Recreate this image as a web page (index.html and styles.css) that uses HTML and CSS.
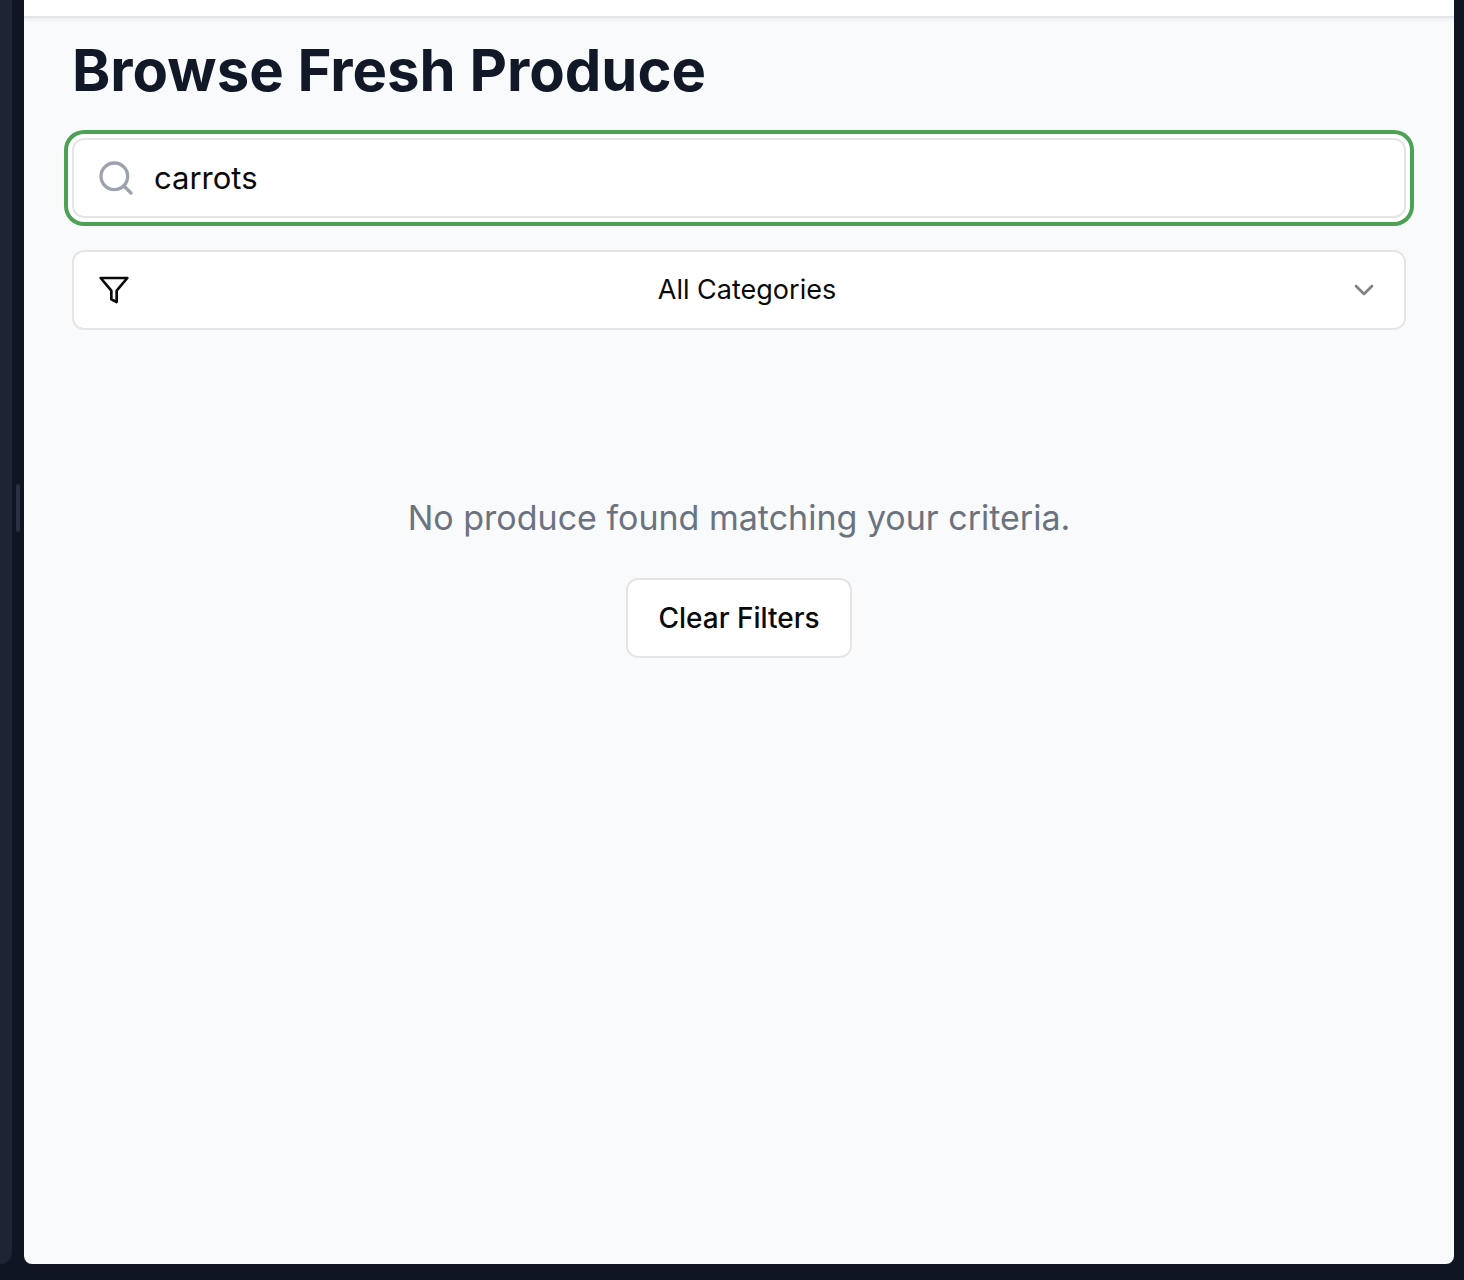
FILE: index.html
```html
<!DOCTYPE html>
<html lang="en">
<head>
  <meta charset="utf-8">
  <meta name="viewport" content="width=device-width, initial-scale=1">
  <title>Browse Fresh Produce</title>
  <link rel="stylesheet" href="styles.css">
</head>
<body>
  <div class="workspace">
    <aside class="side-panel"></aside>
    <div class="resizer"><span class="resizer-grip"></span></div>
    <div class="preview">
      <header class="site-header"></header>
      <main class="page">
        <h1 class="title">Browse Fresh Produce</h1>
        <div class="search">
          <svg class="search-icon" viewBox="0 0 24 24" aria-hidden="true"><circle cx="11" cy="11" r="8"/><path d="m21 21-4.3-4.3"/></svg>
          <input class="search-input" type="text" value="carrots" aria-label="Search produce">
        </div>
        <div class="category">
          <select class="category-select" aria-label="Category">
            <option>All Categories</option>
          </select>
          <svg class="category-icon" viewBox="0 0 24 24" aria-hidden="true"><polygon points="22 3 2 3 10 12.46 10 19 14 21 14 12.46 22 3"/></svg>
          <svg class="category-icon category-chevron" viewBox="0 0 24 24" aria-hidden="true"><path d="m6 9 6 6 6-6"/></svg>
        </div>
        <section class="empty">
          <p class="empty-text">No produce found matching your criteria.</p>
          <button class="clear-button" type="button">Clear Filters</button>
        </section>
      </main>
    </div>
  </div>
</body>
</html>
```
FILE: styles.css
```css
* {
  box-sizing: border-box;
}

body {
  margin: 0;
  background: #0f1523;
  color: #0a0a0a;
  font-family: Inter, "Liberation Sans", sans-serif;
}

.workspace {
  display: flex;
  min-height: 100vh;
  padding: 0 10px 16px 0;
}

.side-panel {
  flex: 0 0 12px;
  background: #1e2433;
  border-bottom-right-radius: 16px;
}

.resizer {
  display: flex;
  flex: 0 0 12px;
  justify-content: center;
  padding-top: 484px;
}

.resizer-grip {
  width: 4px;
  height: 48px;
  border-radius: 2px;
  background: #2b3042;
}

.preview {
  flex: 1;
  min-width: 0;
  overflow: hidden;
  border-radius: 0 0 8px 8px;
  background: #f9fafb;
}

.site-header {
  height: 18px;
  border-bottom: 2px solid #e3e5e9;
  background: #fff;
  box-shadow: 0 2px 4px rgba(0, 0, 0, 0.05);
}

.page {
  display: flex;
  flex-direction: column;
  gap: 32px;
  padding: 16px 48px;
}

.title {
  margin: 0;
  color: #111827;
  font-size: 58px;
  font-weight: 700;
  line-height: 72px;
}

.search {
  display: flex;
  align-items: center;
  gap: 18px;
  height: 80px;
  padding: 0 22px;
  border: 2px solid #e5e5e5;
  border-radius: 12px;
  background: #fff;
  box-shadow: 0 0 0 4px #fff, 0 0 0 8px #4ca154;
}

.search-icon,
.category-icon {
  flex: none;
  fill: none;
  stroke: currentColor;
  stroke-width: 2;
  stroke-linecap: round;
  stroke-linejoin: round;
}

.search-icon {
  width: 40px;
  height: 40px;
  color: #9ca3af;
}

.search-input {
  flex: 1;
  min-width: 0;
  padding: 0;
  border: 0;
  outline: 0;
  background: transparent;
  color: inherit;
  font: 400 31px/48px Inter, "Liberation Sans", sans-serif;
}

.category {
  display: grid;
  align-items: center;
}

.category > * {
  grid-area: 1 / 1;
}

.category-select {
  width: 100%;
  height: 80px;
  padding: 0 56px 0 72px;
  appearance: none;
  border: 2px solid #e5e5e5;
  border-radius: 12px;
  background: #fff;
  color: inherit;
  font: 400 27px/40px Inter, "Liberation Sans", sans-serif;
  text-align-last: center;
}

.category-icon {
  width: 32px;
  height: 32px;
  margin: 0 26px;
  pointer-events: none;
}

.category-chevron {
  justify-self: end;
  opacity: 0.5;
}

.empty {
  display: flex;
  flex-direction: column;
  align-items: center;
  gap: 32px;
  padding: 128px 0;
}

.empty-text {
  margin: 0;
  color: #6b7280;
  font-size: 34px;
  line-height: 56px;
}

.clear-button {
  height: 80px;
  padding: 0 30px;
  border: 2px solid #e5e5e5;
  border-radius: 12px;
  background: #fff;
  color: inherit;
  font: 500 28px/40px Inter, "Liberation Sans", sans-serif;
}
```
